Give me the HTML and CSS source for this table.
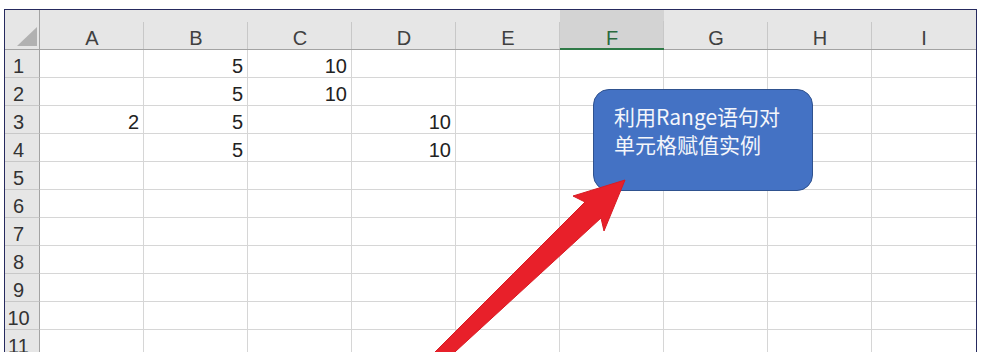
FILE: index.html
```html
<!DOCTYPE html>
<html lang="zh-CN">
<head>
<meta charset="utf-8">
<title>Range</title>
<link rel="stylesheet" href="styles.css">
</head>
<body>
<div class="page">
  <div class="sheet">
    <div class="corner"><svg width="20" height="19" viewBox="0 0 20 19"><polygon points="0,19 20,19 20,0" fill="#b1b1b1"/></svg></div>
    <div class="ch">A</div><div class="ch">B</div><div class="ch">C</div><div class="ch">D</div><div class="ch">E</div><div class="ch sel">F</div><div class="ch">G</div><div class="ch">H</div><div class="ch">I</div>

    <div class="rh">1</div><div class="c"></div><div class="c">5</div><div class="c">10</div><div class="c"></div><div class="c"></div><div class="c"></div><div class="c"></div><div class="c"></div><div class="c"></div>
    <div class="rh">2</div><div class="c"></div><div class="c">5</div><div class="c">10</div><div class="c"></div><div class="c"></div><div class="c"></div><div class="c"></div><div class="c"></div><div class="c"></div>
    <div class="rh">3</div><div class="c">2</div><div class="c">5</div><div class="c"></div><div class="c">10</div><div class="c"></div><div class="c"></div><div class="c"></div><div class="c"></div><div class="c"></div>
    <div class="rh">4</div><div class="c"></div><div class="c">5</div><div class="c"></div><div class="c">10</div><div class="c"></div><div class="c"></div><div class="c"></div><div class="c"></div><div class="c"></div>
    <div class="rh">5</div><div class="c"></div><div class="c"></div><div class="c"></div><div class="c"></div><div class="c"></div><div class="c"></div><div class="c"></div><div class="c"></div><div class="c"></div>
    <div class="rh">6</div><div class="c"></div><div class="c"></div><div class="c"></div><div class="c"></div><div class="c"></div><div class="c"></div><div class="c"></div><div class="c"></div><div class="c"></div>
    <div class="rh">7</div><div class="c"></div><div class="c"></div><div class="c"></div><div class="c"></div><div class="c"></div><div class="c"></div><div class="c"></div><div class="c"></div><div class="c"></div>
    <div class="rh">8</div><div class="c"></div><div class="c"></div><div class="c"></div><div class="c"></div><div class="c"></div><div class="c"></div><div class="c"></div><div class="c"></div><div class="c"></div>
    <div class="rh">9</div><div class="c"></div><div class="c"></div><div class="c"></div><div class="c"></div><div class="c"></div><div class="c"></div><div class="c"></div><div class="c"></div><div class="c"></div>
    <div class="rh">10</div><div class="c"></div><div class="c"></div><div class="c"></div><div class="c"></div><div class="c"></div><div class="c"></div><div class="c"></div><div class="c"></div><div class="c"></div>
    <div class="rh">11</div><div class="c"></div><div class="c"></div><div class="c"></div><div class="c"></div><div class="c"></div><div class="c"></div><div class="c"></div><div class="c"></div><div class="c"></div>
  </div>

  <div class="callout">利用Range语句对<br>单元格赋值实例</div>

  <svg class="arrow" width="988" height="352" viewBox="0 0 988 352">
    <polygon points="625,180 604,231 601,218 444,362 426,361 585,202 573,196" fill="#e8202a" stroke="#d81c24" stroke-width="1" stroke-linejoin="miter"/>
  </svg>
</div>
</body>
</html>
```

FILE: styles.css
```css
html, body {
  margin: 0;
  padding: 0;
  background: #ffffff;
  overflow: hidden;
}

.page {
  position: relative;
  width: 988px;
  height: 352px;
  overflow: hidden;
  font-family: "Liberation Sans", Arial, sans-serif;
}

.sheet {
  margin: 9px 0 0 4px;
  width: 971px;
  border-top: 1px solid #262a5f;
  border-left: 1px solid #262a5f;
  border-right: 1px solid #262a5f;
  display: grid;
  grid-template-columns: 35px repeat(9, 104px);
  grid-template-rows: 40px;
  grid-auto-rows: 28px;
}

.sheet > div {
  box-sizing: border-box;
  display: flex;
  align-items: flex-end;
  font-size: 20px;
  line-height: 20px;
  padding-bottom: 1px;
}

.corner {
  background: #e6e6e6;
  border-right: 1px solid #a3a3a3;
  border-bottom: 1px solid #a3a3a3;
  justify-content: flex-end;
}

.sheet > .corner {
  padding: 0 2px 3px 0;
}

.corner svg {
  display: block;
}

.ch {
  background: #e6e6e6 linear-gradient(#c8c8c8, #c8c8c8) right bottom / 1px 27px no-repeat;
  border-bottom: 1px solid #a3a3a3;
  justify-content: center;
  color: #404040;
  font-size: 19px;
}

.ch.sel {
  background: #d3d3d3 linear-gradient(#c8c8c8, #c8c8c8) right bottom / 1px 27px no-repeat;
  border-bottom: 2px solid #2f7a47;
  color: #2a6a3d;
}

.sheet > .ch.sel {
  padding-bottom: 0;
}

.sheet > .ch:nth-child(10n) {
  background-image: none;
}

.rh {
  background: #e6e6e6;
  border-right: 1px solid #a3a3a3;
  border-bottom: 1px solid #c8c8c8;
  justify-content: center;
  padding-right: 7px;
  color: #333333;
}

.c {
  border-right: 1px solid #d6d6d6;
  border-bottom: 1px solid #d6d6d6;
  justify-content: flex-end;
  padding-right: 4px;
  color: #222222;
}

.sheet > .c:nth-child(10n) {
  border-right: none;
}

.callout {
  position: absolute;
  left: 593px;
  top: 89px;
  width: 220px;
  height: 102px;
  box-sizing: border-box;
  background: #4472c4;
  border: 1.5px solid #2f528f;
  border-radius: 16px;
  padding: 12px 0 0 20px;
  color: #f4f6fb;
  font-family: "Noto Sans CJK SC", "Noto Sans", sans-serif;
  font-size: 21px;
  line-height: 28px;
}

.arrow {
  position: absolute;
  left: 0;
  top: 0;
  pointer-events: none;
}
```
